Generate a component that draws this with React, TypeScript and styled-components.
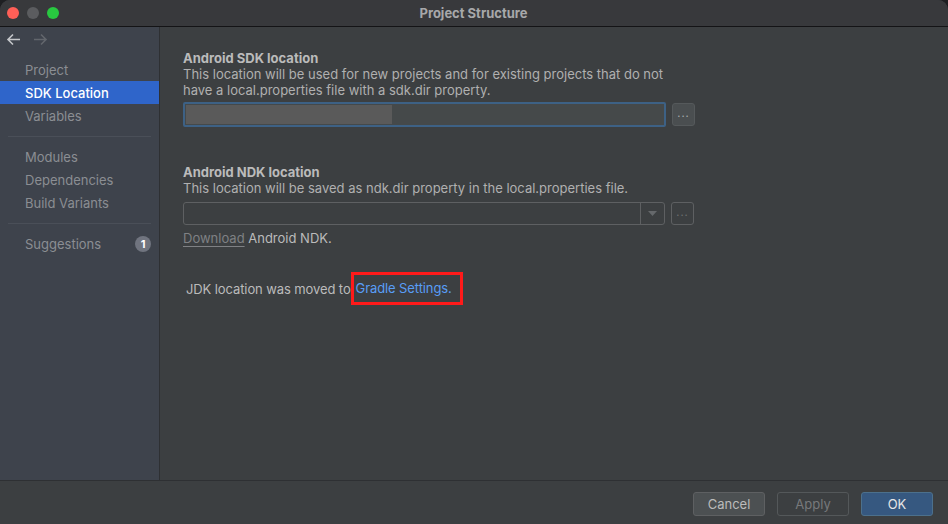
import { ReactElement } from 'react'
import styled, { createGlobalStyle } from 'styled-components'

const GlobalStyle = createGlobalStyle`
  html, body {
    margin: 0;
    padding: 0;
    background: #1e1f22;
  }
  body {
    font-family: Inter, 'Noto Sans', 'Liberation Sans', sans-serif;
    font-size: 13px;
    -webkit-font-smoothing: antialiased;
  }
`

const Window = styled.div`
  width: 948px;
  height: 524px;
  display: flex;
  flex-direction: column;
  background: #3c3f41;
  border-radius: 10px 10px 0 0;
  overflow: hidden;
`

const TitleBar = styled.div`
  height: 26px;
  flex: none;
  display: flex;
  align-items: center;
  background: #38393c;
  border-bottom: 1px solid #141416;
`

const Lights = styled.div`
  display: flex;
  gap: 8px;
  padding-left: 7px;
`

const Light = styled.span<{ $color: string }>`
  width: 12px;
  height: 12px;
  border-radius: 50%;
  background: ${(p) => p.$color};
`

const Title = styled.div`
  flex: 1;
  text-align: center;
  margin-right: 60px;
  font-weight: 700;
  color: #a7a8aa;
  font-size: 13px;
`

const Body = styled.div`
  flex: 1;
  display: flex;
  min-height: 0;
`

const Sidebar = styled.nav`
  width: 159px;
  flex: none;
  background: #3e434c;
  border-right: 1px solid #2e3033;
  display: flex;
  flex-direction: column;
`

const ArrowRow = styled.div`
  height: 31px;
  display: flex;
  align-items: flex-start;
  gap: 12px;
  padding: 6px 0 0 6px;
  box-sizing: border-box;
`

const NavItem = styled.div<{ $active?: boolean }>`
  height: 23px;
  display: flex;
  align-items: center;
  padding: 0 8px 0 25px;
  color: ${(p) => (p.$active ? '#ffffff' : '#8b8e93')};
  background: ${(p) => (p.$active ? '#2f65ca' : 'transparent')};
  font-weight: ${(p) => (p.$active ? 500 : 400)};
`

const NavSeparator = styled.div`
  height: 1px;
  background: #4a4f58;
  margin: 9px 8px 8px 8px;
`

const Badge = styled.span`
  margin-left: auto;
  width: 16px;
  height: 16px;
  border-radius: 50%;
  background: #70747f;
  color: #ffffff;
  font-size: 11px;
  font-weight: 700;
  display: flex;
  align-items: center;
  justify-content: center;
`

const Content = styled.main`
  flex: 1;
  padding: 23px 0 0 23px;
  color: #bbbbbb;
  line-height: 16px;
`

const Heading = styled.div<{ $top?: number }>`
  font-weight: 700;
  color: #bbbbbb;
  margin-top: ${(p) => p.$top ?? 0}px;
`

const Note = styled.div`
  color: #b0b0b0;
`

const FieldRow = styled.div<{ $top: number }>`
  display: flex;
  align-items: center;
  gap: 6px;
  margin-top: ${(p) => p.$top}px;
`

const PathInput = styled.div`
  width: 483px;
  height: 25px;
  box-sizing: border-box;
  border: 2px solid #3d6185;
  border-radius: 2px;
  background: #45494a;
  display: flex;
  padding: 1px;
`

const Blurred = styled.div`
  width: 206px;
  background: #5a5a5a;
`

const Combo = styled.div`
  width: 482px;
  height: 23px;
  box-sizing: border-box;
  border: 1px solid #5e6062;
  border-radius: 3px;
  display: flex;
  justify-content: flex-end;
`

const ComboArrow = styled.div`
  width: 23px;
  border-left: 1px solid #5e6062;
  display: flex;
  align-items: center;
  justify-content: center;
`

const DotsButton = styled.div<{ $dim?: boolean }>`
  width: 23px;
  height: 23px;
  box-sizing: border-box;
  border: 1px solid ${(p) => (p.$dim ? '#5e6062' : '#55595b')};
  background: ${(p) => (p.$dim ? 'transparent' : '#4a4e50')};
  border-radius: 3px;
  display: flex;
  align-items: center;
  justify-content: center;
  color: ${(p) => (p.$dim ? '#6e7072' : '#a9abad')};
  font-size: 11px;
  letter-spacing: 1px;
  padding-bottom: 3px;
`

const DownloadLine = styled.div`
  margin-top: 5px;
  color: #bbbbbb;
`

const DimLink = styled.span`
  color: #7f8184;
  text-decoration: underline;
  text-underline-offset: 3px;
`

const JdkLine = styled.div`
  margin-top: 26px;
  display: flex;
  align-items: center;
  padding-left: 3px;
  color: #bbbbbb;
  letter-spacing: -0.1px;
`

const Highlight = styled.span`
  margin-left: 0;
  border: 3px solid #ff1a1a;
  padding: 5px 8px 6px 2px;
  color: #589df6;
`

const Footer = styled.footer`
  height: 44px;
  flex: none;
  border-top: 1px solid #2e3033;
  display: flex;
  align-items: flex-start;
  justify-content: flex-end;
  gap: 12px;
  padding: 11px 15px 0 0;
  box-sizing: border-box;
`

const Button = styled.div<{ $variant: 'default' | 'disabled' | 'primary' }>`
  width: 72px;
  height: 24px;
  box-sizing: border-box;
  border-radius: 3px;
  display: flex;
  align-items: center;
  justify-content: center;
  border: 1px solid
    ${(p) =>
      p.$variant === 'primary' ? '#4c708c' : p.$variant === 'disabled' ? '#54585a' : '#5e6062'};
  background: ${(p) =>
    p.$variant === 'primary' ? '#365880' : p.$variant === 'disabled' ? 'transparent' : '#4c5052'};
  color: ${(p) =>
    p.$variant === 'primary' ? '#e6e6e6' : p.$variant === 'disabled' ? '#77797b' : '#bbbbbb'};
`

const Arrow = ({ dir, color }: { dir: 'left' | 'right'; color: string }): ReactElement => (
  <svg width="15" height="13" viewBox="0 0 15 13" fill="none">
    {dir === 'left' ? (
      <path d="M14 6.5H2M7 1.5L2 6.5L7 11.5" stroke={color} strokeWidth="1.6" />
    ) : (
      <path d="M1 6.5H13M8 1.5L13 6.5L8 11.5" stroke={color} strokeWidth="1.6" />
    )}
  </svg>
)

export default function App(): ReactElement {
  return (
    <>
      <GlobalStyle />
      <Window>
        <TitleBar>
          <Lights>
            <Light $color="#fe5f57" />
            <Light $color="#5b5c5f" />
            <Light $color="#28c840" />
          </Lights>
          <Title>Project Structure</Title>
        </TitleBar>
        <Body>
          <Sidebar>
            <ArrowRow>
              <Arrow dir="left" color="#c4c6c9" />
              <Arrow dir="right" color="#62666c" />
            </ArrowRow>
            <NavItem>Project</NavItem>
            <NavItem $active>SDK Location</NavItem>
            <NavItem>Variables</NavItem>
            <NavSeparator />
            <NavItem>Modules</NavItem>
            <NavItem>Dependencies</NavItem>
            <NavItem>Build Variants</NavItem>
            <NavSeparator />
            <NavItem>
              Suggestions
              <Badge>1</Badge>
            </NavItem>
          </Sidebar>
          <Content>
            <Heading>Android SDK location</Heading>
            <Note>This location will be used for new projects and for existing projects that do not</Note>
            <Note>have a local.properties file with a sdk.dir property.</Note>
            <FieldRow $top={4}>
              <PathInput>
                <Blurred />
              </PathInput>
              <DotsButton>...</DotsButton>
            </FieldRow>

            <Heading $top={37}>Android NDK location</Heading>
            <Note>This location will be saved as ndk.dir property in the local.properties file.</Note>
            <FieldRow $top={6}>
              <Combo>
                <ComboArrow>
                  <svg width="9" height="5" viewBox="0 0 9 5">
                    <path d="M0 0H9L4.5 5Z" fill="#65686b" />
                  </svg>
                </ComboArrow>
              </Combo>
              <DotsButton $dim>...</DotsButton>
            </FieldRow>
            <DownloadLine>
              <DimLink>Download</DimLink> Android NDK.
            </DownloadLine>

            <JdkLine>
              JDK location was moved to
              <Highlight>Gradle Settings.</Highlight>
            </JdkLine>
          </Content>
        </Body>
        <Footer>
          <Button $variant="default">Cancel</Button>
          <Button $variant="disabled">Apply</Button>
          <Button $variant="primary">OK</Button>
        </Footer>
      </Window>
    </>
  )
}
